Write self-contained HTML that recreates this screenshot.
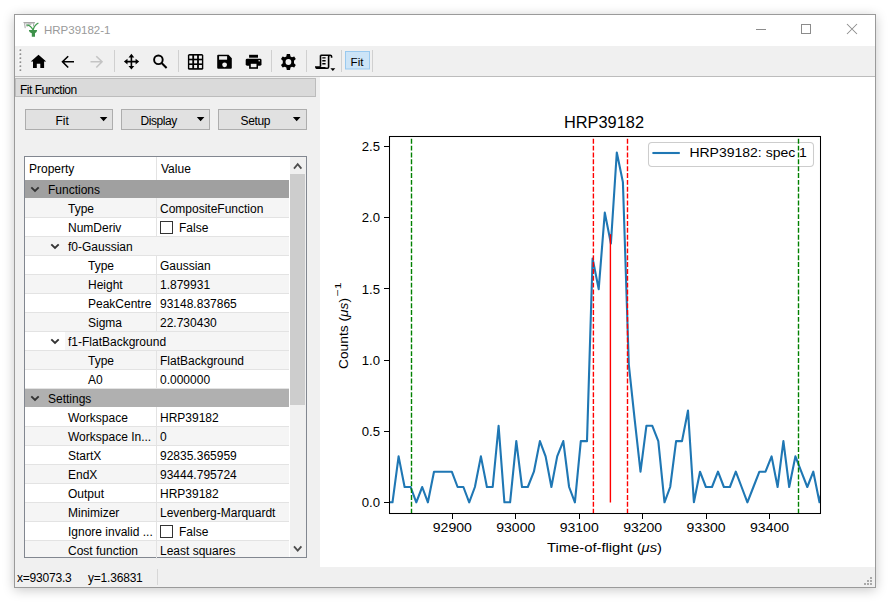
<!DOCTYPE html>
<html><head><meta charset="utf-8">
<style>
*{margin:0;padding:0;box-sizing:border-box}
html,body{width:892px;height:606px;overflow:hidden;background:#fff;font-family:"Liberation Sans",sans-serif;font-size:12px;color:#000}
.a{position:absolute}
#win{position:absolute;left:14px;top:14px;width:862px;height:574px;border:1px solid #9a9a9a;background:#f0f0f0;box-shadow:0 2px 11px rgba(0,0,0,0.22)}
.t{position:absolute;white-space:nowrap;line-height:14px}
.btn{position:absolute;top:109px;height:21px;width:88px;background:#e1e1e1;border:1px solid #adadad}
.row{position:absolute;left:25px;width:264px;height:19px;border-bottom:1px solid #e3e3e3}
.g{background:#a6a6a6;border-bottom:1px solid #a6a6a6}
.odd{background:#f5f5f5}
.ev{background:#fff}
.div{position:absolute;left:131px;top:0;width:1px;height:18px;background:#e3e3e3}
.lb{position:absolute;top:3px;white-space:nowrap;line-height:14px}
.vl{position:absolute;left:135px;top:3px;white-space:nowrap;line-height:14px}
.sep{position:absolute;top:50px;width:1px;height:22px;background:#d2d2d2}
</style></head><body>
<div id="win"></div>
<!-- title bar -->
<div class="a" style="left:15px;top:15px;width:860px;height:31px;background:#fff"></div>
<div class="t" style="left:44px;top:22.5px;font-size:11.5px;color:#9a9a9a">HRP39182-1</div>
<!-- toolbar -->
<div class="a" style="left:15px;top:46px;width:860px;height:30px;background:#f0f0f0"></div>
<div class="a" style="left:15px;top:76px;width:860px;height:1px;background:#bcbcbc"></div>
<!-- dock title -->
<div class="a" style="left:15px;top:78px;width:301px;height:19px;background:#dadada;border:1px solid #bcbcbc"></div>
<div class="t" style="left:20px;top:83px;letter-spacing:-0.5px">Fit Function</div>
<!-- buttons -->
<div class="btn" style="left:25px"></div>
<div class="btn" style="left:121px;width:89px"></div>
<div class="btn" style="left:218px;width:89px"></div>
<div class="t" style="left:55.5px;top:114px">Fit</div>
<div class="t" style="left:140.5px;top:114px;letter-spacing:-0.45px">Display</div>
<div class="t" style="left:240.5px;top:114px;letter-spacing:-0.35px">Setup</div>
<!-- table -->
<div class="a" style="left:24px;top:156px;width:283px;height:402px;border:1px solid #828790;background:#fff"></div>
<div class="a" style="left:25px;top:157px;width:264px;height:23px;background:#fff"></div>
<div class="a" style="left:156px;top:157px;width:1px;height:23px;background:#e3e3e3"></div>
<div class="t" style="left:29px;top:162px">Property</div>
<div class="t" style="left:161px;top:162px">Value</div>
<div id="rows">
<div class="row g" style="top:180px;height:18px;background:#a0a0a0;border-bottom:none"><svg class="a" style="left:5px;top:6px" width="10" height="7" viewBox="0 0 10 7"><path d="M1.3 1.3 L5 5 L8.7 1.3" fill="none" stroke="#333" stroke-width="1.9"/></svg><div class="lb" style="left:23px">Functions</div></div>
<div class="row odd" style="top:198px;height:20px;"><div class="div" style="height:19px"></div><div class="lb" style="left:43px;top:4px">Type</div><div class="vl" style="top:4px">CompositeFunction</div></div>
<div class="row ev" style="top:218px;height:19px;"><div class="div" style="height:18px"></div><div class="lb" style="left:43px;top:3px">NumDeriv</div><div class="a" style="left:135px;top:3px;width:13px;height:13px;border:1px solid #333;background:#fff"></div><div class="vl" style="left:154px">False</div></div>
<div class="row odd" style="top:237px;height:19px;"><svg class="a" style="left:25px;top:6px" width="10" height="7" viewBox="0 0 10 7"><path d="M1.3 1.3 L5 5 L8.7 1.3" fill="none" stroke="#333" stroke-width="1.9"/></svg><div class="lb" style="left:43px">f0-Gaussian</div></div>
<div class="row ev" style="top:256px;height:19px;"><div class="div" style="height:18px"></div><div class="lb" style="left:63px;top:3px">Type</div><div class="vl" style="top:3px">Gaussian</div></div>
<div class="row odd" style="top:275px;height:19px;"><div class="div" style="height:18px"></div><div class="lb" style="left:63px;top:3px">Height</div><div class="vl" style="top:3px">1.879931</div></div>
<div class="row ev" style="top:294px;height:19px;"><div class="div" style="height:18px"></div><div class="lb" style="left:63px;top:3px">PeakCentre</div><div class="vl" style="top:3px">93148.837865</div></div>
<div class="row odd" style="top:313px;height:19px;"><div class="div" style="height:18px"></div><div class="lb" style="left:63px;top:3px">Sigma</div><div class="vl" style="top:3px">22.730430</div></div>
<div class="row ev" style="top:332px;height:19px;"><svg class="a" style="left:25px;top:6px" width="10" height="7" viewBox="0 0 10 7"><path d="M1.3 1.3 L5 5 L8.7 1.3" fill="none" stroke="#333" stroke-width="1.9"/></svg><div class="a" style="left:40px;top:0;width:224px;height:18px;background:#f5f5f5"></div><div class="lb" style="left:43px">f1-FlatBackground</div></div>
<div class="row odd" style="top:351px;height:19px;"><div class="div" style="height:18px"></div><div class="lb" style="left:63px;top:3px">Type</div><div class="vl" style="top:3px">FlatBackground</div></div>
<div class="row ev" style="top:370px;height:19px;"><div class="div" style="height:18px"></div><div class="lb" style="left:63px;top:3px">A0</div><div class="vl" style="top:3px">0.000000</div></div>
<div class="row g" style="top:389px;height:18px;background:#b0b0b0;border-bottom:none"><svg class="a" style="left:5px;top:6px" width="10" height="7" viewBox="0 0 10 7"><path d="M1.3 1.3 L5 5 L8.7 1.3" fill="none" stroke="#333" stroke-width="1.9"/></svg><div class="lb" style="left:23px">Settings</div></div>
<div class="row ev" style="top:407px;height:20px;"><div class="div" style="height:19px"></div><div class="lb" style="left:43px;top:4px">Workspace</div><div class="vl" style="top:4px">HRP39182</div></div>
<div class="row odd" style="top:427px;height:19px;"><div class="div" style="height:18px"></div><div class="lb" style="left:43px;top:3px">Workspace In...</div><div class="vl" style="top:3px">0</div></div>
<div class="row ev" style="top:446px;height:19px;"><div class="div" style="height:18px"></div><div class="lb" style="left:43px;top:3px">StartX</div><div class="vl" style="top:3px">92835.365959</div></div>
<div class="row odd" style="top:465px;height:19px;"><div class="div" style="height:18px"></div><div class="lb" style="left:43px;top:3px">EndX</div><div class="vl" style="top:3px">93444.795724</div></div>
<div class="row ev" style="top:484px;height:19px;"><div class="div" style="height:18px"></div><div class="lb" style="left:43px;top:3px">Output</div><div class="vl" style="top:3px">HRP39182</div></div>
<div class="row odd" style="top:503px;height:19px;"><div class="div" style="height:18px"></div><div class="lb" style="left:43px;top:3px">Minimizer</div><div class="vl" style="top:3px">Levenberg-Marquardt</div></div>
<div class="row ev" style="top:522px;height:19px;"><div class="div" style="height:18px"></div><div class="lb" style="left:43px;top:3px">Ignore invalid ...</div><div class="a" style="left:135px;top:3px;width:13px;height:13px;border:1px solid #333;background:#fff"></div><div class="vl" style="left:154px">False</div></div>
<div class="row odd" style="top:541px;height:16px;border-bottom:none;"><div class="div" style="height:18px"></div><div class="lb" style="left:43px;top:3px">Cost function</div><div class="vl" style="top:3px">Least squares</div></div>

</div>
<!-- scrollbar -->
<div class="a" style="left:290px;top:157px;width:16px;height:400px;background:#f0f0f0"></div>
<div class="a" style="left:290px;top:174px;width:15px;height:231px;background:#cdcdcd"></div>
<!-- plot canvas -->
<div class="a" style="left:320px;top:77px;width:555px;height:490px;background:#fff"></div>
<!-- status -->
<div class="t" style="left:17px;top:571px;letter-spacing:-0.2px;word-spacing:0">x=93073.3</div>
<div class="t" style="left:88px;top:571px;letter-spacing:-0.2px">y=1.36831</div>
<div class="a" style="left:157px;top:569px;width:1px;height:16px;background:#d7d7d7"></div>
<svg class="a" style="left:0;top:0" width="892" height="606" viewBox="0 0 892 606">
<g font-family="Liberation Sans" fill="#000">
<text x="564" y="128" font-size="16.5" textLength="80" lengthAdjust="spacingAndGlyphs">HRP39182</text>
</g>
<rect x="648.5" y="142.5" width="165" height="24" rx="3.5" fill="#fff" fill-opacity="0.8" stroke="#cdcdcd" stroke-width="1.05"/>
<line x1="652.4" y1="153" x2="679.8" y2="153" stroke="#1f77b4" stroke-width="2.1"/>
<text x="689.4" y="157.3" font-family="Liberation Sans" font-size="13" fill="#000" textLength="117.5" lengthAdjust="spacingAndGlyphs">HRP39182: spec 1</text>
<clipPath id="ax"><rect x="389.5" y="136.5" width="431" height="377"/></clipPath>
<g clip-path="url(#ax)">
<polyline fill="none" stroke="#1f77b4" stroke-width="2.1" stroke-linejoin="round" points="386.6,502.3 392.5,502.3 398.6,456.4 404.6,487.0 410.6,487.0 416.3,502.3 422.2,487.0 427.9,502.3 434.0,471.7 439.9,471.7 445.9,471.7 451.8,471.7 457.6,487.0 463.4,487.0 469.2,502.3 474.9,487.0 480.9,456.4 486.9,487.0 492.7,487.0 498.6,425.8 504.4,502.3 510.1,502.3 516.3,441.1 522.0,487.0 527.8,487.0 533.9,471.7 539.9,441.1 545.6,456.4 551.4,487.0 557.2,456.4 563.3,441.1 569.1,487.0 574.9,502.3 580.8,441.1 587.0,441.1 592.6,258.5 598.7,289.1 604.8,212.6 610.9,243.5 616.8,152.5 622.9,182.1 628.8,364.6 634.6,418.9 640.5,471.7 646.4,425.8 652.3,425.8 658.3,441.1 664.5,502.3 670.2,487.0 676.1,441.1 682.0,441.1 688.0,410.5 693.9,502.3 700.0,471.7 705.9,487.0 712.0,487.0 718.0,471.7 723.9,487.0 729.9,487.0 735.8,471.7 741.6,487.0 747.4,502.3 753.4,487.0 759.4,471.7 765.5,471.7 771.6,456.4 777.6,487.0 783.4,441.1 789.2,487.0 795.4,456.4 801.3,471.7 807.3,487.0 813.3,471.7 819.5,502.3 825.4,471.7"/>
<line x1="411.5" y1="131.95" x2="411.5" y2="520" stroke="#008000" stroke-width="1.4" stroke-dasharray="4.93 1.92"/>
<line x1="798.5" y1="131.95" x2="798.5" y2="520" stroke="#008000" stroke-width="1.4" stroke-dasharray="4.93 1.92"/>

<line x1="593.4" y1="131.95" x2="593.4" y2="520" stroke="#ff0000" stroke-width="1.4" stroke-dasharray="4.93 1.92"/>
<line x1="627.5" y1="131.95" x2="627.5" y2="520" stroke="#ff0000" stroke-width="1.4" stroke-dasharray="4.93 1.92"/>
<line x1="610.4" y1="502.6" x2="610.4" y2="234.2" stroke="#ff0000" stroke-width="1.4"/>
</g>
<rect x="389.5" y="136.5" width="431" height="377" fill="none" stroke="#000" stroke-width="1.05"/>
<g stroke="#000" stroke-width="1">
<line x1="384" y1="502.5" x2="389.5" y2="502.5"/><line x1="384" y1="431.5" x2="389.5" y2="431.5"/>
<line x1="384" y1="360.5" x2="389.5" y2="360.5"/><line x1="384" y1="288.5" x2="389.5" y2="288.5"/>
<line x1="384" y1="217.5" x2="389.5" y2="217.5"/><line x1="384" y1="146.5" x2="389.5" y2="146.5"/>
<line x1="452.5" y1="513.5" x2="452.5" y2="519"/><line x1="515.5" y1="513.5" x2="515.5" y2="519"/>
<line x1="579.5" y1="513.5" x2="579.5" y2="519"/><line x1="642.5" y1="513.5" x2="642.5" y2="519"/>
<line x1="706.5" y1="513.5" x2="706.5" y2="519"/><line x1="769.5" y1="513.5" x2="769.5" y2="519"/>
</g>
<g font-family="Liberation Sans" font-size="13" fill="#000" text-anchor="end">
<text x="380" y="507" textLength="18.3" lengthAdjust="spacingAndGlyphs">0.0</text><text x="380" y="435.8" textLength="18.3" lengthAdjust="spacingAndGlyphs">0.5</text><text x="380" y="364.7" textLength="18.3" lengthAdjust="spacingAndGlyphs">1.0</text>
<text x="380" y="293.5" textLength="18.3" lengthAdjust="spacingAndGlyphs">1.5</text><text x="380" y="222.3" textLength="18.3" lengthAdjust="spacingAndGlyphs">2.0</text><text x="380" y="151.1" textLength="18.3" lengthAdjust="spacingAndGlyphs">2.5</text>
</g>
<g font-family="Liberation Sans" font-size="13" fill="#000" text-anchor="middle">
<text x="452.3" y="532" textLength="39" lengthAdjust="spacingAndGlyphs">92900</text>
<text x="515.75" y="532" textLength="39" lengthAdjust="spacingAndGlyphs">93000</text>
<text x="579.2" y="532" textLength="39" lengthAdjust="spacingAndGlyphs">93100</text>
<text x="642.65" y="532" textLength="39" lengthAdjust="spacingAndGlyphs">93200</text>
<text x="706.1" y="532" textLength="39" lengthAdjust="spacingAndGlyphs">93300</text>
<text x="769.55" y="532" textLength="39" lengthAdjust="spacingAndGlyphs">93400</text>
</g>
<text x="547" y="552" font-family="Liberation Sans" font-size="13" fill="#000" textLength="115" lengthAdjust="spacingAndGlyphs">Time-of-flight (<tspan font-style="italic">μs</tspan>)</text>
<g transform="translate(348 369) rotate(-90)">
<text x="0" y="0" font-family="Liberation Sans" font-size="13.6" fill="#000" textLength="71" lengthAdjust="spacingAndGlyphs">Counts (<tspan font-style="italic">μs</tspan>)</text>
<text x="72.5" y="-6.8" font-family="Liberation Sans" font-size="9.5" fill="#000" textLength="14" lengthAdjust="spacingAndGlyphs">−1</text>
</g>


</svg>
<svg class="a" style="left:0;top:0" width="892" height="606" viewBox="0 0 892 606">
<!-- app icon -->
<g>
<path d="M23.2 22 H35.2 L34.4 23.4 H24 Z" fill="#a8a8a8"/>
<path d="M24.6 23.4 L25.2 28.2 M26.6 24.6 L27.2 26.8 M28.2 24.2 H31.4 M33.8 23.4 L33.4 26.5" stroke="#9c9c9c" stroke-width="0.9" fill="none"/>
<path d="M33 30 C32 27.5 29.5 25.2 26.6 24.8 M33.2 30 C33.8 27 35.5 24.5 38.4 23" stroke="#3f9a4c" stroke-width="1.2" fill="none"/>
<path d="M28.9 30.1 H37.1 C37.1 32.2 35.6 33 35 33.2 V36.7 H31.8 V33.2 C30.6 33 28.9 32.2 28.9 30.1 Z" fill="#3d914a"/>
</g>
<!-- window controls -->
<line x1="756" y1="29.5" x2="766" y2="29.5" stroke="#8c8c8c" stroke-width="1"/>
<rect x="801.5" y="24.5" width="9" height="9" fill="none" stroke="#8c8c8c" stroke-width="1"/>
<path d="M847 24 L857 34 M857 24 L847 34" stroke="#8c8c8c" stroke-width="1.05"/>
<!-- toolbar grip -->
<g><rect x="18.5" y="48.5" width="2" height="2" fill="#fff"/><rect x="19.5" y="49.3" width="1.7" height="1.7" fill="#8f8f8f"/><rect x="18.5" y="52.5" width="2" height="2" fill="#fff"/><rect x="19.5" y="53.3" width="1.7" height="1.7" fill="#8f8f8f"/><rect x="18.5" y="56.5" width="2" height="2" fill="#fff"/><rect x="19.5" y="57.3" width="1.7" height="1.7" fill="#8f8f8f"/><rect x="18.5" y="60.5" width="2" height="2" fill="#fff"/><rect x="19.5" y="61.3" width="1.7" height="1.7" fill="#8f8f8f"/><rect x="18.5" y="64.5" width="2" height="2" fill="#fff"/><rect x="19.5" y="65.3" width="1.7" height="1.7" fill="#8f8f8f"/><rect x="18.5" y="68.5" width="2" height="2" fill="#fff"/><rect x="19.5" y="69.3" width="1.7" height="1.7" fill="#8f8f8f"/></g>
<!-- home -->
<path d="M38.5 54.8 L46.2 61.5 H44.1 V67.9 H40.3 V63.8 H36.8 V67.9 H33 V61.5 H30.8 Z" fill="#000"/>
<!-- back -->
<path d="M74 61.8 H62.5 M68.2 56.2 L62.5 61.8 L68.2 67.5" fill="none" stroke="#000" stroke-width="1.6"/>
<!-- forward -->
<path d="M90.5 61.8 H102 M96.3 56.2 L102 61.8 L96.3 67.5" fill="none" stroke="#c4c4c4" stroke-width="1.6"/>
<!-- separators -->
<g fill="#d0d0d0">
<rect x="114" y="50" width="1" height="22"/><rect x="178" y="50" width="1" height="22"/><rect x="271" y="50" width="1" height="22"/>
<rect x="306" y="50" width="1" height="22"/><rect x="341" y="50" width="1" height="22"/><rect x="372" y="50" width="1" height="22"/>
</g>
<!-- move -->
<path d="M131.4 56 V67.3 M126 61.6 H136.8" stroke="#000" stroke-width="1.6"/>
<path d="M131.4 53.8 L134.3 57.4 H128.5 Z M131.4 69.5 L134.3 65.9 H128.5 Z M123.9 61.6 L127.5 58.7 V64.5 Z M139.2 61.6 L135.6 58.7 V64.5 Z" fill="#000"/>
<!-- zoom -->
<circle cx="158.4" cy="59.8" r="4.3" fill="none" stroke="#000" stroke-width="1.9"/>
<path d="M161.6 63 L166.6 68" stroke="#000" stroke-width="2"/>
<!-- grid -->
<rect x="187.9" y="53.9" width="15.4" height="15.9" rx="1.6" fill="#000"/>
<g fill="#f0f0f0">
<rect x="189.3" y="55.6" width="3" height="3.1"/><rect x="194.1" y="55.6" width="3" height="3.1"/><rect x="198.9" y="55.6" width="3" height="3.1"/>
<rect x="189.3" y="60.3" width="3" height="3.1"/><rect x="194.1" y="60.3" width="3" height="3.1"/><rect x="198.9" y="60.3" width="3" height="3.1"/>
<rect x="189.3" y="65" width="3" height="3.1"/><rect x="194.1" y="65" width="3" height="3.1"/><rect x="198.9" y="65" width="3" height="3.1"/>
</g>
<!-- save -->
<path d="M218.2 54.8 H228.5 L231.8 58.2 V67.8 Q231.8 68.8 230.8 68.8 H218.2 Q217.2 68.8 217.2 67.8 V55.8 Q217.2 54.8 218.2 54.8 Z" fill="#000"/>
<rect x="219.1" y="56.2" width="8" height="3.5" fill="#f0f0f0"/>
<circle cx="224.6" cy="64.8" r="2.4" fill="#f0f0f0"/>
<!-- print -->
<rect x="249.1" y="54.8" width="8.9" height="2.9" fill="#000"/>
<rect x="245.7" y="58.7" width="15.8" height="7" rx="1.4" fill="#000"/>
<rect x="249.1" y="62.6" width="8.9" height="6.2" fill="#000"/>
<rect x="250.8" y="63.8" width="5.7" height="3.4" fill="#f0f0f0"/>
<circle cx="259.2" cy="60.8" r="0.8" fill="#f0f0f0"/>
<!-- gear -->
<g transform="translate(288.4 62)">
<path d="M-1.6 -7.9 H1.6 L2.1 -5.6 L3.6 -4.8 L5.8 -5.6 L7.4 -2.9 L5.6 -1.3 V1.3 L7.4 2.9 L5.8 5.6 L3.6 4.8 L2.1 5.6 L1.6 7.9 H-1.6 L-2.1 5.6 L-3.6 4.8 L-5.8 5.6 L-7.4 2.9 L-5.6 1.3 V-1.3 L-7.4 -2.9 L-5.8 -5.6 L-3.6 -4.8 L-2.1 -5.6 Z" fill="#000"/>
<circle r="2.9" fill="#f0f0f0"/>
</g>
<!-- script -->
<path d="M320.5 55.2 H330.2 Q331.6 55.2 331.6 56.6 V57.8 M330.2 55.2 Q328.6 55.2 328.6 56.8 V67 Q328.6 68.3 327.2 68.3 H317.2 Q315.8 68.3 315.8 67 H320.8 M320.5 55.2 V66.6" fill="none" stroke="#000" stroke-width="1.6"/>
<path d="M316 67 H325.5 V69 H317 Q316 69 316 68 Z" fill="#000"/>
<path d="M322.3 57.9 H325.6 M322.3 60.8 H325.6 M322.3 63.7 H325.6" stroke="#000" stroke-width="1.4"/>
<path d="M330.4 68.2 H335.3 L332.85 70.9 Z" fill="#000"/>
<!-- fit toggle -->
<rect x="345.5" y="51.5" width="24" height="17.5" fill="#cce4f7" stroke="#99c9ef" stroke-width="1"/>
<text x="350.6" y="66.3" font-family="Liberation Sans" font-size="11.6" fill="#000">Fit</text>
<!-- button triangles -->
<path d="M99.8 116.9 H107.4 L103.6 121.2 Z M196.8 116.9 H204.4 L200.6 121.2 Z M292.9 116.9 H300.5 L296.7 121.2 Z" fill="#000"/>
<!-- scroll arrows -->
<path d="M294 168.6 L297.7 164.2 L301.4 168.6" fill="none" stroke="#4d4d4d" stroke-width="1.8"/>
<path d="M294 546.3 L297.7 550.7 L301.4 546.3" fill="none" stroke="#4d4d4d" stroke-width="1.8"/>
<!-- resize grip -->
<g fill="#a9a9a9">
<rect x="870" y="577" width="2" height="2"/><rect x="867" y="580" width="2" height="2"/><rect x="870" y="580" width="2" height="2"/>
<rect x="864" y="583" width="2" height="2"/><rect x="867" y="583" width="2" height="2"/><rect x="870" y="583" width="2" height="2"/>
</g>
</svg>
</body></html>
